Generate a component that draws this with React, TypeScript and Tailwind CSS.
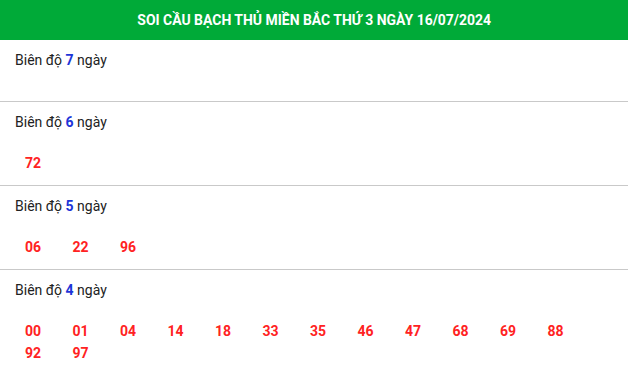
import React from 'react';

interface Section {
    days: number;
    numbers: string[];
}

const sections: Section[] = [
    { days: 7, numbers: [] },
    { days: 6, numbers: ['72'] },
    { days: 5, numbers: ['06', '22', '96'] },
    { days: 4, numbers: ['00', '01', '04', '14', '18', '33', '35', '46', '47', '68', '69', '88', '92', '97'] },
];

const App: React.FC = () => {
    return (
        <div className="w-[628px] min-h-[373px] bg-white font-['Roboto','Liberation_Sans',sans-serif]">
            <div className="h-[40px] bg-[#00aa38] flex items-center justify-center">
                <h1 className="text-white text-[15px] font-bold whitespace-nowrap scale-x-[0.93]">
                    SOI CẦU BẠCH THỦ MIỀN BẮC THỨ 3 NGÀY 16/07/2024
                </h1>
            </div>

            {sections.map((s, i) => (
                <div key={s.days} className={i < sections.length - 1 ? 'border-b border-[#c9c9c9]' : ''}>
                    <div className="pt-[10px] pl-[15px] text-[14px] leading-[20px] text-[#222]">
                        Biên độ <span className="font-bold text-[#1d35d8]">{s.days}</span> ngày
                    </div>
                    <div className="pt-[20px] pb-[11px] pl-[25px]">
                        <div className="grid grid-cols-12 w-[570px]">
                            {s.numbers.map(n => (
                                <span key={n} className="text-[14px] leading-[22px] font-bold text-[#ff2222]">{n}</span>
                            ))}
                        </div>
                    </div>
                </div>
            ))}
        </div>
    );
};

export default App;
